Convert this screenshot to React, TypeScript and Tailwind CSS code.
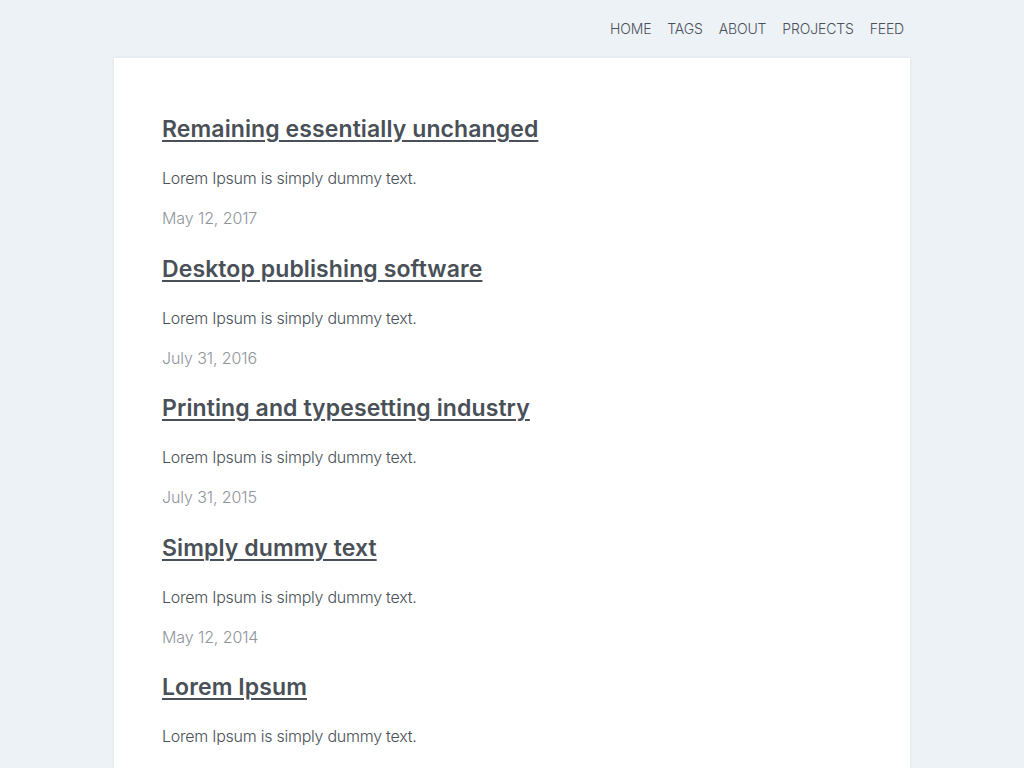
const posts = [
  { title: 'Remaining essentially unchanged', date: 'May 12, 2017' },
  { title: 'Desktop publishing software', date: 'July 31, 2016' },
  { title: 'Printing and typesetting industry', date: 'July 31, 2015' },
  { title: 'Simply dummy text', date: 'May 12, 2014' },
  { title: 'Lorem Ipsum', date: 'May 12, 2013' },
];

const links = ['HOME', 'TAGS', 'ABOUT', 'PROJECTS', 'FEED'];

export default function App() {
  return (
    <div className="min-h-screen bg-[#edf2f7] font-['Inter',sans-serif] text-[#495057]">
      <div className="mx-auto w-[796px]">
        {/* Nav */}
        <nav className="flex h-[58px] items-center justify-end gap-4 pr-[6px] pb-[1px]">
          {links.map((link) => (
            <a key={link} href="#" className="text-[14px] leading-5 font-light tracking-[-0.15px] text-[#495057]">
              {link}
            </a>
          ))}
        </nav>

        {/* Posts */}
        <main className="bg-white px-12 pt-[55px] pb-12 shadow-[0_0_4px_rgba(0,0,0,0.06)]">
          {posts.map((post) => (
            <article key={post.title} className="mb-[22.5px]">
              <h2 className="text-[23px] leading-8 font-semibold tracking-[0.1px]">
                <a href="#" className="underline decoration-[2px] underline-offset-[3px]">
                  {post.title}
                </a>
              </h2>
              <p className="mt-[21px] text-[16px] leading-6 font-light tracking-[-0.25px]">
                Lorem Ipsum is simply dummy text.
              </p>
              <p className="mt-4 text-[16px] leading-6 font-light tracking-[-0.1px] text-[#8f949b]">{post.date}</p>
            </article>
          ))}
        </main>
      </div>
    </div>
  );
}
